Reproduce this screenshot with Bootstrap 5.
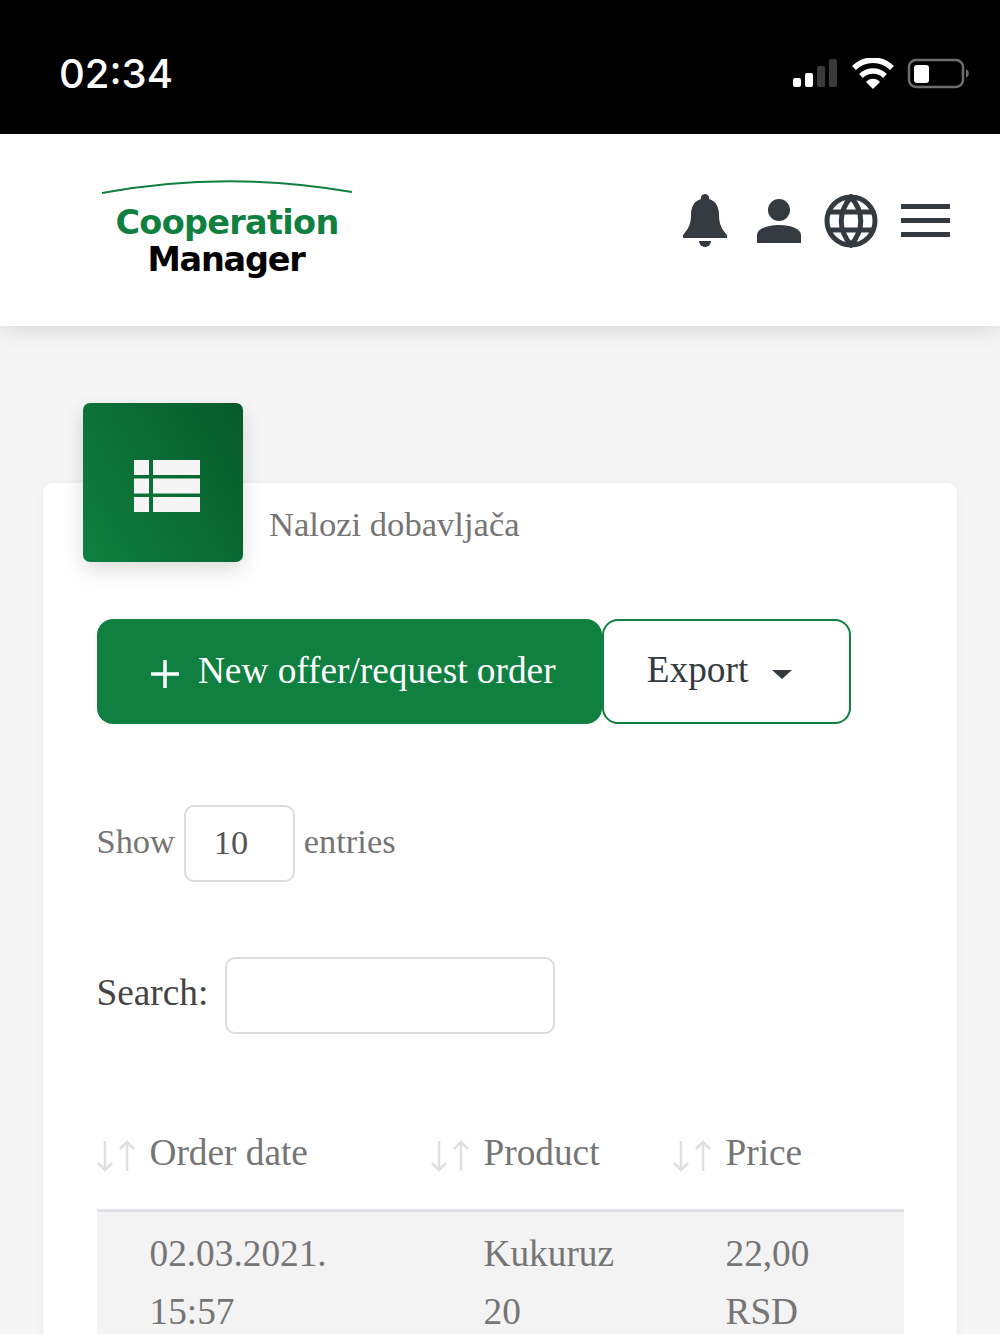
<!DOCTYPE html>
<html lang="en">
<head>
    <meta charset="UTF-8">
    <meta name="viewport" content="width=device-width, initial-scale=1.0">
    <title>Cooperation Manager</title>
    <link href="https://cdn.jsdelivr.net/npm/bootstrap@5.3.0/dist/css/bootstrap.min.css" rel="stylesheet">
    <style>
        html, body { height: 1334px; overflow: hidden; }
        body {
            background: #f5f5f5;
            font-family: "Liberation Serif", serif;
            color: #757575;
        }
        .status-strip {
            height: 134px;
            background: #000;
            padding: 0 31px 0 59px;
        }
        .status-time {
            font-family: Inter, "Liberation Sans", sans-serif;
            font-weight: 500;
            font-size: 40px;
            color: #fff;
            line-height: 1;
            margin-top: 14px;
        }
        .status-icons { margin-top: 16px; }
        .app-bar {
            height: 192px;
            background: #fff;
            padding: 0 50px 0 100px;
            box-shadow: 0 4px 20px rgba(0, 0, 0, .12);
        }
        .app-logo {
            width: 254px;
            font-family: "DejaVu Sans", sans-serif;
            font-weight: 700;
            text-align: center;
            line-height: 38px;
            font-size: 33.5px;
        }
        .app-logo svg { display: block; height: 22px; margin-bottom: 7px; margin-top: -7px; }
        .logo-green { color: #0f8040; letter-spacing: -.7px; }
        .logo-dark { color: #000; letter-spacing: -1.2px; margin-top: -1px; margin-left: -2px; }
        .bar-icons { color: #343a40; padding-bottom: 18px; }
        .bar-icons .icon-user { margin-left: 30px; }
        .bar-icons .icon-globe { margin-left: 23px; }
        .bar-icons .icon-menu { margin-left: 23px; }
        .page-wrap { padding: 77px 43px 0; }
        .main-card {
            border: 0;
            border-radius: 9px;
            margin-top: 80px;
            min-height: 900px;
            box-shadow: 0 1px 6px rgba(0, 0, 0, .07);
            padding: 0 53px 0 53.5px;
        }
        .head-row { margin: -80px 0 0 -13.5px; }
        .head-tile {
            width: 160px;
            height: 159px;
            padding: 7px 0 0 8px;
            border-radius: 7px;
            background: linear-gradient(60deg, #0f8040, #075a2a);
            box-shadow: 0 8px 20px rgba(0, 0, 0, .14);
        }
        .head-title {
            font-size: 34.6px;
            line-height: 40px;
            margin: 101px 0 0 26px;
            color: #757575;
        }
        .action-row { margin-top: 57px; }
        .btn-new {
            width: 505.5px;
            height: 105px;
            background: #0f8040;
            border: 0;
            border-radius: 16px;
            color: #fff;
            font-size: 37.3px;
            padding: 0 0 2px 7px;
            gap: 18px;
        }
        .btn-new svg { margin-top: 6px; }
        .btn-new:hover { background: #0f8040; color: #fff; }
        .btn-export {
            width: 249px;
            height: 105px;
            background: #fff;
            border: 2.5px solid #0f8040;
            border-radius: 16px;
            color: #343a40;
            font-size: 37.3px;
            padding: 0 14px 4px 0;
        }
        .btn-export.dropdown-toggle::after {
            margin-left: 24px;
            vertical-align: 3px;
            border-top-width: 9px;
            border-right-width: 10px;
            border-left-width: 10px;
            border-bottom: 0;
        }
        .len-row { margin-top: 81px; font-size: 34.4px; gap: 9px; }
        .len-row span { padding-bottom: 3px; }
        .len-row .len-value {
            width: 111px;
            height: 77px;
            padding: 0 0 2px 28px;
            font-family: "Liberation Serif", serif;
            font-size: 34.4px;
            color: #555;
            border: 2px solid #dcdcdc;
            border-radius: 10px;
            background-image: none;
        }
        .search-row { margin-top: 75px; font-size: 37.3px; gap: 17px; color: #444; }
        .search-row label { padding-bottom: 6px; }
        .search-row .form-control {
            width: 330px;
            height: 77px;
            border: 2px solid #dcdcdc;
            border-radius: 10px;
        }
        .order-table {
            width: 807px;
            margin-top: 97px;
            table-layout: fixed;
            color: #757575;
            font-size: 37.3px;
        }
        .order-table th {
            font-weight: 400;
            color: #757575;
            padding: 0 0 34px 0;
            line-height: 44px;
            border-bottom: 3px solid #dee2e6;
        }
        .order-table th:nth-child(1) { width: 334px; }
        .order-table th:nth-child(2) { width: 242px; }
        .order-table th:nth-child(3) { width: 231px; }
        .order-table th svg { margin-top: 6px; }
        .order-table td {
            padding: 13px 0 0 53px;
            line-height: 58px;
            border: 0;
            background: #f3f3f3;
            color: #757575;
            box-shadow: none;
        }
        .sort-wrap { gap: 15px; }
    </style>
</head>
<body>
    <div class="status-strip d-flex justify-content-between align-items-center">
        <div class="status-time">02:34</div>
        <div class="status-icons d-flex align-items-center">
            <svg width="178" height="34" viewBox="0 0 178 34">
                <rect x="2" y="20" width="8" height="9" rx="2" fill="#fff"/>
                <rect x="14" y="15" width="8" height="14" rx="2" fill="#fff"/>
                <rect x="26" y="8" width="8" height="21" rx="2" fill="#3a3a3a"/>
                <rect x="38" y="1" width="8" height="28" rx="2" fill="#3a3a3a"/>
                <path d="M63 10a27 27 0 0 1 38 0" fill="none" stroke="#fff" stroke-width="5.500"/>
                <path d="M70 18a17 17 0 0 1 24 0" fill="none" stroke="#fff" stroke-width="5.500"/>
                <path d="M75 24a9 9 0 0 1 14 0l-7 7z" fill="#fff"/>
                <rect x="118" y="2" width="54" height="27" rx="7" fill="none" stroke="#6d6d6d" stroke-width="2.500"/>
                <rect x="123" y="7" width="15" height="18" rx="3" fill="#fff"/>
                <path d="M175 11a5 5 0 0 1 0 9z" fill="#6d6d6d"/>
            </svg>
        </div>
    </div>

    <nav class="navbar app-bar d-flex justify-content-between align-items-center flex-nowrap">
        <div class="app-logo">
            <svg width="254" height="22" viewBox="0 0 254 22"><path d="M2 18Q126-5 252 17" fill="none" stroke="#0f8040" stroke-width="2"/></svg>
            <div class="logo-green">Cooperation</div>
            <div class="logo-dark">Manager</div>
        </div>
        <div class="bar-icons d-flex align-items-center">
            <svg width="44" height="54" viewBox="0 0 44 54" fill="#343a40">
                <path d="M22 0a4 4 0 0 1 4 5c7 2 10 8 10 16 0 11 4 15 8 20v3H0v-3c4-5 8-9 8-20C8 13 11 7 18 5a4 4 0 0 1 4-5z"/>
                <path d="M16 47h12a6 6 0 0 1-12 0z"/>
            </svg>
            <svg class="icon-user" width="44" height="44" viewBox="0 0 44 44" fill="#343a40">
                <circle cx="22" cy="11" r="11"/>
                <path d="M0 44V36C0 30 10 26 22 26s22 4 22 10v8z"/>
            </svg>
            <svg class="icon-globe" width="54" height="54" viewBox="0 0 54 54" fill="none" stroke="#343a40" stroke-width="5">
                <circle cx="27" cy="27" r="24"/>
                <path d="M27 3C14 18 14 36 27 51C40 36 40 18 27 3zM4 18h46M4 36h46"/>
            </svg>
            <svg class="icon-menu" width="49" height="34" viewBox="0 0 49 34" fill="#343a40">
                <rect y="0" width="49" height="5"/>
                <rect y="14" width="49" height="5"/>
                <rect y="28" width="49" height="5"/>
            </svg>
        </div>
    </nav>

    <div class="page-wrap">
        <div class="card main-card">
            <div class="head-row d-flex">
                <div class="head-tile d-flex align-items-center justify-content-center flex-shrink-0">
                    <svg width="66" height="52" viewBox="0 0 66 52" fill="#f5f5f5">
                        <rect x="0" y="0" width="15" height="15"/>
                        <rect x="0" y="18.500" width="15" height="15"/>
                        <rect x="0" y="37" width="15" height="15"/>
                        <rect x="19" y="0" width="47" height="15"/>
                        <rect x="19" y="18.500" width="47" height="15"/>
                        <rect x="19" y="37" width="47" height="15"/>
                    </svg>
                </div>
                <div class="head-title">Nalozi dobavljača</div>
            </div>

            <div class="action-row d-flex">
                <button class="btn btn-new d-flex align-items-center justify-content-center" type="button">
                    <svg width="30" height="30" viewBox="0 0 30 30"><path d="M15 1v28M1 15h28" stroke="#fff" stroke-width="3.500"/></svg>
                    <span>New offer/request order</span>
                </button>
                <button class="btn btn-export dropdown-toggle" type="button" data-bs-toggle="dropdown">Export</button>
                <ul class="dropdown-menu">
                    <li><a class="dropdown-item" href="#">Excel</a></li>
                    <li><a class="dropdown-item" href="#">PDF</a></li>
                </ul>
            </div>

            <div class="len-row d-flex align-items-center">
                <span>Show</span>
                <select class="form-select len-value"><option>10</option><option>25</option></select>
                <span>entries</span>
            </div>

            <div class="search-row d-flex align-items-center">
                <label for="orderSearch">Search:</label>
                <input id="orderSearch" type="search" class="form-control">
            </div>

            <table class="table order-table">
                <thead>
                    <tr>
                        <th><div class="d-flex align-items-center sort-wrap">
                            <svg width="38" height="32" viewBox="0 0 38 32" fill="none" stroke="#e0e0e0" stroke-width="2.500"><path d="M8 1v29M1 23l7 7 7-7M30 31V2M23 9l7-7 7 7"/></svg>
                            <span>Order date</span></div></th>
                        <th><div class="d-flex align-items-center sort-wrap">
                            <svg width="38" height="32" viewBox="0 0 38 32" fill="none" stroke="#e0e0e0" stroke-width="2.500"><path d="M8 1v29M1 23l7 7 7-7M30 31V2M23 9l7-7 7 7"/></svg>
                            <span>Product</span></div></th>
                        <th><div class="d-flex align-items-center sort-wrap">
                            <svg width="38" height="32" viewBox="0 0 38 32" fill="none" stroke="#e0e0e0" stroke-width="2.500"><path d="M8 1v29M1 23l7 7 7-7M30 31V2M23 9l7-7 7 7"/></svg>
                            <span>Price</span></div></th>
                    </tr>
                </thead>
                <tbody>
                    <tr>
                        <td>02.03.2021.<br>15:57</td>
                        <td>Kukuruz<br>20</td>
                        <td>22,00<br>RSD</td>
                    </tr>
                </tbody>
            </table>
        </div>
    </div>

    <script src="https://cdn.jsdelivr.net/npm/bootstrap@5.3.0/dist/js/bootstrap.bundle.min.js"></script>
</body>
</html>
